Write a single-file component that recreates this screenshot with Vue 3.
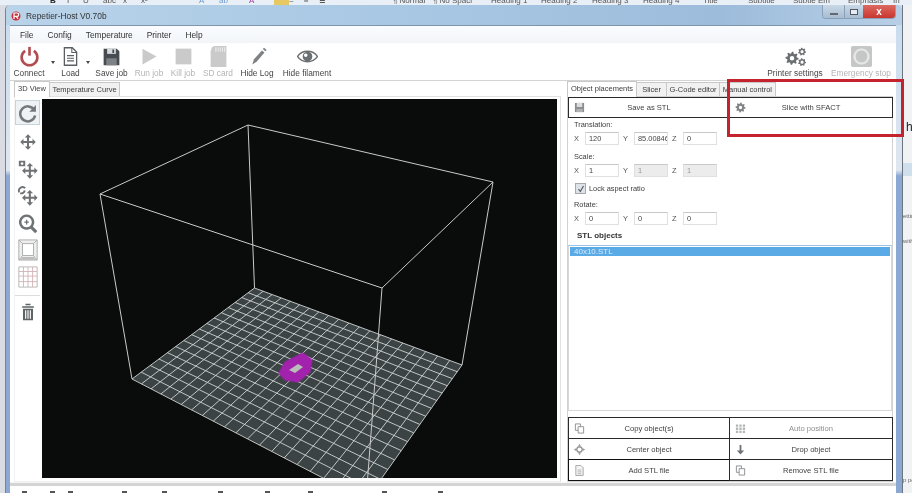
<template>
  <div class="screen">
    <div class="ribbon">
      <span v-for="r in ribbonItems" :key="r.t" :class="r.c" :style="{ width: r.w + 'px' }">{{ r.t }}</span>
    </div>

    <div class="desk">
      <div class="window">
        <div class="titlebar">
          <svg class="app-icon" width="10" height="10" viewBox="0 0 10 10">
            <circle cx="5" cy="5" r="4.5" fill="#c8303a" />
            <path d="M3 8V2h3a1.6 1.6 0 0 1 0 3.4H3M5.4 5.4 7 8" fill="none" stroke="#fff" stroke-width="1.2" />
          </svg>
          <span class="app-title">Repetier-Host V0.70b</span>
          <div class="caption">
            <div class="cap-btn cap-min"><i></i></div>
            <div class="cap-btn cap-max"><i></i></div>
            <div class="cap-btn cap-close">x</div>
          </div>
        </div>

        <div class="client">
          <div class="menubar">
            <span v-for="m in menus" :key="m" class="menu">{{ m }}</span>
          </div>

          <div class="toolbar">
            <div v-for="t in toolbarLeft" :key="t.label" class="tool" :class="{ off: t.off }" :style="{ width: t.w + 'px' }">
              <template v-if="t.arrow"><i class="drop"></i></template>
              <template v-else>
                <svg class="tool-icon" viewBox="0 0 24 24" width="21" height="21">
                  <path v-for="(p, i) in icons[t.icon]" :key="i" v-bind="p" fill-rule="evenodd" />
                </svg>
                <span>{{ t.label }}</span>
              </template>
            </div>
            <div class="spacer"></div>
            <div v-for="t in toolbarRight" :key="t.label" class="tool" :class="{ off: t.off }" :style="{ width: t.w + 'px' }">
              <svg class="tool-icon" viewBox="0 0 24 24" width="21" height="21">
                <path v-for="(p, i) in icons[t.icon]" :key="i" v-bind="p" fill-rule="evenodd" />
              </svg>
              <span>{{ t.label }}</span>
            </div>
          </div>

          <div class="workspace">
            <div class="left">
              <div class="tabs left-tabs">
                <div class="tab active">3D View</div>
                <div class="tab">Temperature Curve</div>
              </div>
              <div class="view-pane">
                <div class="side">
                  <div v-for="s in sideIcons" :key="s.icon" class="side-btn" :class="s.c">
                    <svg viewBox="0 0 24 24" width="22" height="22">
                      <path v-for="(p, i) in icons[s.icon]" :key="i" v-bind="p" fill-rule="evenodd" />
                    </svg>
                  </div>
                </div>
                <svg class="canvas" width="515" height="379" viewBox="42 99 515 379">
                  <path :d="floorOutline" fill="#3c4345" />
                  <path :d="gridPath" fill="none" stroke="#d0d4d2" stroke-width="0.9" />
                  <path d="M100 194 248 125 493 182 382 288ZM100 194 132 379M248 125 254.5 288M493 182 462 365M382 288 366 500" fill="none" stroke="#c8cac8" stroke-width="1" />
                  <path class="object" d="M279 373 285 362 303 353 312 360 310 372 298 382 285 380Z" fill="#a222ae" />
                  <path d="M289 370 298 364 303 367 295 373Z" fill="#b9bcb8" />
                </svg>
              </div>
            </div>

            <div class="right">
              <div class="tabs">
                <div class="tab active">Object placements</div>
                <div class="tab roomy">Slicer</div>
                <div class="tab">G-Code editor</div>
                <div class="tab">Manual control</div>
              </div>
              <div class="panel">
                <div class="btn-grid">
                  <div v-for="b in topButtons" :key="b.label" class="btn">
                    <svg viewBox="0 0 24 24" width="11" height="11">
                      <path v-for="(p, i) in icons[b.icon]" :key="i" v-bind="p" fill-rule="evenodd" />
                    </svg>
                    <span>{{ b.label }}</span>
                  </div>
                </div>

                <div class="form">
                  <template v-for="g in fieldGroups" :key="g.title">
                    <div class="form-label" :class="g.cls">{{ g.title }}</div>
                    <div class="field-row">
                      <template v-for="f in g.fields" :key="f.axis">
                        <span class="axis">{{ f.axis }}</span>
                        <div class="field" :class="{ locked: f.locked }">{{ f.value }}</div>
                      </template>
                    </div>
                    <label v-if="g.check" class="check">
                      <i class="check-box">
                        <svg width="8" height="8" viewBox="0 0 8 8"><path d="M1.5 4 3.3 6.5 6.5 1" fill="none" stroke="#555" stroke-width="1.1" /></svg>
                      </i>
                      Lock aspect ratio
                    </label>
                  </template>
                  <div class="stl-title">STL objects</div>
                </div>

                <div class="listbox">
                  <div class="list-row">40x10.STL</div>
                </div>

                <div class="btn-grid bottom-grid">
                  <div v-for="b in bottomButtons" :key="b.label" class="btn" :class="b.c">
                    <svg viewBox="0 0 24 24" width="11" height="11">
                      <path v-for="(p, i) in icons[b.icon]" :key="i" v-bind="p" fill-rule="evenodd" />
                    </svg>
                    <span>{{ b.label }}</span>
                  </div>
                </div>
              </div>
            </div>
          </div>

          <div class="log-sep"></div>
          <div class="log-bar">
            <i v-for="x in logTicks" :key="x" :style="{ width: x + 'px' }"><b></b></i>
          </div>
        </div>
      </div>

      <div class="doc">
        <span class="doc-h">h</span>
        <div class="doc-band"></div>
        <span class="doc-small doc-ettin">ettin</span>
        <span class="doc-small doc-with">with</span>
        <span class="doc-small doc-po">p po</span>
      </div>
    </div>

    <!-- annotation drawn on top of the screenshot -->
    <div class="red-box"></div>
  </div>
</template>

<script setup>
const ribbonItems = [
  { t: 'B', w: 17, c: 'b' }, { t: 'I', w: 16 }, { t: 'U', w: 20 }, { t: 'abc', w: 20 }, { t: 'x', w: 18 }, { t: 'x²', w: 58 },
  { t: 'A', w: 20, c: 'blue' }, { t: 'ab', w: 30, c: 'blue' }, { t: 'A', w: 25, c: 'pink' },
  { t: '', w: 15, c: 'swatch' }, { t: '=', w: 15 }, { t: '≡', w: 15 }, { t: '≣', w: 74 },
  { t: '¶ Normal', w: 40 }, { t: '¶ No Spaci', w: 58 }, { t: 'Heading 1', w: 50 }, { t: 'Heading 2', w: 51 },
  { t: 'Heading 3', w: 51 }, { t: 'Heading 4', w: 60 }, { t: 'Title', w: 45 }, { t: 'Subtitle', w: 45 },
  { t: 'Subtle Em', w: 55 }, { t: 'Emphasis', w: 45 }, { t: 'In', w: 10 },
]

const menus = ['File', 'Config', 'Temperature', 'Printer', 'Help']

const toolbarLeft = [
  { label: 'Connect', icon: 'power', w: 38 },
  { label: 'a1', arrow: true, w: 10 },
  { label: 'Load', icon: 'doc', w: 25 },
  { label: 'a2', arrow: true, w: 10 },
  { label: 'Save job', icon: 'floppy', w: 37 },
  { label: 'Run job', icon: 'play', w: 38, off: true },
  { label: 'Kill job', icon: 'stop', w: 30, off: true },
  { label: 'SD card', icon: 'sd', w: 40, off: true },
  { label: 'Hide Log', icon: 'pencil', w: 38 },
  { label: 'Hide filament', icon: 'eye', w: 62 },
]
const toolbarRight = [
  { label: 'Printer settings', icon: 'gears', w: 70 },
  { label: 'Emergency stop', icon: 'emergency', w: 62, off: true },
]

const sideIcons = [
  { icon: 'reset', c: 'selected' },
  { icon: 'move' },
  { icon: 'moveCam' },
  { icon: 'moveRot' },
  { icon: 'zoom' },
  { icon: 'box', c: 'faint' },
  { icon: 'grid', c: 'faint' },
  { icon: 'trash', c: 'after-line' },
]

const topButtons = [
  { label: 'Save as STL', icon: 'floppySoft' },
  { label: 'Slice with SFACT', icon: 'gearOne' },
]
const bottomButtons = [
  { label: 'Copy object(s)', icon: 'copy' },
  { label: 'Auto position', icon: 'dots', c: 'dim' },
  { label: 'Center object', icon: 'center' },
  { label: 'Drop object', icon: 'down' },
  { label: 'Add STL file', icon: 'docSoft', c: 'strong' },
  { label: 'Remove STL file', icon: 'copy' },
]

const fieldGroups = [
  {
    title: 'Translation:',
    fields: [{ axis: 'X', value: '120' }, { axis: 'Y', value: '85.00846' }, { axis: 'Z', value: '0' }],
  },
  {
    title: 'Scale:',
    check: true,
    fields: [{ axis: 'X', value: '1' }, { axis: 'Y', value: '1', locked: true }, { axis: 'Z', value: '1', locked: true }],
  },
  {
    title: 'Rotate:',
    cls: 'tight',
    fields: [{ axis: 'X', value: '0' }, { axis: 'Y', value: '0' }, { axis: 'Z', value: '0' }],
  },
]

// spacing between the cut off icons of the log toolbar
const logTicks = [17, 28, 18, 54, 40, 56, 47, 43, 74, 56]

function gear(cx, cy, r, teeth, hole) {
  let d = ''
  const n = teeth * 4
  for (let i = 0; i < n; i++) {
    const a = (i / n) * Math.PI * 2
    const rr = i % 4 < 2 ? r : r * 0.74
    d += (i ? 'L' : 'M') + (cx + Math.cos(a) * rr).toFixed(2) + ' ' + (cy + Math.sin(a) * rr).toFixed(2)
  }
  d += 'Z'
  d += `M${cx - hole} ${cy}a${hole} ${hole} 0 1 0 ${hole * 2} 0a${hole} ${hole} 0 1 0 ${-hole * 2} 0Z`
  return d
}

function cross(cx, cy, s) {
  const a = s
  const t = s * 0.42
  const w = s * 0.13
  let d = ''
  d += `M${cx} ${cy - a}l${t} ${t}h${-t + w}V${cy - w}H${cx + a - t}v${-t + w}L${cx + a} ${cy}l${-t} ${t}v${-t + w}H${cx + w}V${cy + a - t}h${t - w}L${cx} ${cy + a}l${-t} ${-t}h${t - w}V${cy + w}H${cx - a + t}v${t - w}L${cx - a} ${cy}l${t} ${-t}v${t - w}H${cx - w}V${cy - a + t}h${-t + w}Z`
  return d
}

const icons = {
  power: [
    { d: 'M7 5.5A9 9 0 1 0 17 5.5', fill: 'none', stroke: '#b24d50', 'stroke-width': 3 },
    { d: 'M12 1V11', fill: 'none', stroke: '#b24d50', 'stroke-width': 3 },
  ],
  doc: [
    { d: 'M5 2h9l5 5v15H5z', fill: 'none', stroke: '#5a5f63', 'stroke-width': 1.5 },
    { d: 'M13.5 2v5.5H19M8 11h8M8 14h8M8 17h8', fill: 'none', stroke: '#5a5f63', 'stroke-width': 1.2 },
  ],
  floppy: [
    { d: 'M3 3h15l3 3v16H3z', fill: '#474c52' },
    { d: 'M7 3h10v6H7z', fill: '#d8dadb' },
    { d: 'M13 4h2v4h-2z', fill: '#474c52' },
    { d: 'M6 14h12v8H6z', fill: '#7d8185' },
  ],
  play: [{ d: 'M4 3 20 12 4 21z', fill: '#cacaca' }],
  stop: [{ d: 'M3 3h18v18H3z', fill: '#cacaca' }],
  sd: [
    { d: 'M7 0h14v24H3V5l1-1V2z', fill: '#cacaca' },
    { d: 'M9 1.5v5M11.5 1.5v5M14 1.5v5M16.5 1.5v5M19 1.5v5', fill: 'none', stroke: '#f2f2f2', 'stroke-width': 1 },
  ],
  pencil: [
    { d: 'M8 15 17 5l3 2.5L11 18l-5 3z', fill: '#7f8285' },
    { d: 'M18 3.5l1.5-1.5 3 2.5L21 6z', fill: '#7f8285' },
  ],
  eye: [
    { d: 'M0.5 12C6 4 18 4 23.5 12 18 20 6 20 .5 12z', fill: 'none', stroke: '#6b6f72', 'stroke-width': 1.6 },
    { d: 'M12 6.5a5.5 5.5 0 1 0 .01 0zM10 8.5a2 2 0 1 0 .01 0z', fill: '#6b6f72' },
  ],
  gears: [
    { d: gear(8, 14, 7.5, 8, 2.6), fill: '#6a6f72' },
    { d: gear(19.5, 6.5, 4.6, 7, 1.8), fill: '#6a6f72' },
    { d: gear(19.5, 18.5, 4.6, 7, 1.8), fill: '#6a6f72' },
  ],
  emergency: [
    { d: 'M2 0h20a2 2 0 0 1 2 2v20a2 2 0 0 1-2 2H2a2 2 0 0 1-2-2V2a2 2 0 0 1 2-2z', fill: '#c5c7c7' },
    { d: 'M12 4a8 8 0 1 0 .01 0z', fill: 'none', stroke: '#e6e7e7', 'stroke-width': 2.4 },
  ],
  reset: [
    { d: 'M19.5 8.5A9 9 0 1 0 20.5 15', fill: 'none', stroke: '#74787b', 'stroke-width': 3 },
    { d: 'M21.5 2.5v8h-8z', fill: '#74787b' },
  ],
  move: [{ d: cross(12, 12, 8.5), fill: '#6f7376' }],
  moveCam: [
    { d: cross(14, 14, 8.5), fill: '#6f7376' },
    { d: 'M2 3h7v6H2zM5.5 4.5a1.5 1.5 0 1 0 .01 0z', fill: '#6f7376' },
  ],
  moveRot: [
    { d: cross(14, 14, 8.5), fill: '#6f7376' },
    { d: 'M2.5 8A4 4 0 0 1 9 3.5M8.5 6a4 4 0 0 1-5 3', fill: 'none', stroke: '#6f7376', 'stroke-width': 2 },
  ],
  zoom: [
    { d: 'M10.5 4a7 7 0 1 0 .01 0z', fill: 'none', stroke: '#6f7376', 'stroke-width': 2.6 },
    { d: 'M15.5 16.5 21 22', fill: 'none', stroke: '#6f7376', 'stroke-width': 3.4 },
    { d: 'M8 11h5M10.5 8.5v5', fill: 'none', stroke: '#6f7376', 'stroke-width': 1.4 },
  ],
  box: [
    { d: 'M2 1h20v22H2zM6 5h12v13H6zM2 1l4 4M22 1l-4 4M2 23l4-5M22 23l-4-5', fill: '#eeeeee', stroke: '#a9abab', 'stroke-width': 1 },
    { d: 'M3 22.5l3-3h12l3 3z', fill: '#bdbdbd' },
  ],
  grid: [
    { d: 'M2 1h20v22H2z', fill: 'none', stroke: '#b4b4b4', 'stroke-width': 1 },
    { d: 'M7 1v22M12 1v22M17 1v22M2 6h20M2 11h20M2 17h20', fill: 'none', stroke: '#d3b3b8', 'stroke-width': 1 },
  ],
  trash: [
    { d: 'M5 5h14v2H5zM9 2h6v2H9z', fill: '#5f6467' },
    { d: 'M6 8h12v14H6zM8.5 10v10h1.4V10zM11.3 10v10h1.4V10zM14.1 10v10h1.4V10z', fill: '#5f6467' },
  ],
  floppySoft: [
    { d: 'M2 2h20v20H2z', fill: '#8a8d90' },
    { d: 'M6 2h12v9H6z', fill: '#dcdcdc' },
    { d: 'M5 15h14v7H5z', fill: '#b0b2b4' },
  ],
  gearOne: [{ d: gear(12, 12, 11, 8, 3.6), fill: '#808487' }],
  copy: [
    { d: 'M3 2h11v14H3z', fill: '#fff', stroke: '#8a8d90', 'stroke-width': 2 },
    { d: 'M9 8h12v14H9z', fill: '#fff', stroke: '#8a8d90', 'stroke-width': 2 },
  ],
  dots: [
    { d: 'M2 3h5v5H2zM9.5 3h5v5h-5zM17 3h5v5h-5zM2 10h5v5H2zM9.5 10h5v5h-5zM17 10h5v5h-5zM2 17h5v5H2zM9.5 17h5v5h-5zM17 17h5v5h-5z', fill: '#b4b6b7' },
  ],
  center: [
    { d: 'M12 6a6 6 0 1 0 .01 0z', fill: 'none', stroke: '#8a8d90', 'stroke-width': 3 },
    { d: 'M12 0l3 4H9zM12 24l-3-4h6zM0 12l4-3v6zM24 12l-4 3V9z', fill: '#8a8d90' },
  ],
  down: [{ d: 'M10 2h4v12h6l-8 9-8-9h6z', fill: '#6f7376' }],
  docSoft: [
    { d: 'M4 1h11l5 5v17H4z', fill: '#f4f4f4', stroke: '#a0a2a4', 'stroke-width': 2 },
    { d: 'M8 11h8M8 15h8M8 19h8', fill: 'none', stroke: '#a0a2a4', 'stroke-width': 1.6 },
  ],
}

// printer bed, perspective from unit square to the four visible corners
const bed = [
  [254.5, 288],
  [462, 365],
  [366, 500.3],
  [132, 379],
]
const CELLS_U = 20
const CELLS_V = 16

function makeProjector([p0, p1, p2, p3]) {
  const dx1 = p1[0] - p2[0]
  const dx2 = p3[0] - p2[0]
  const sx = p0[0] - p1[0] + p2[0] - p3[0]
  const dy1 = p1[1] - p2[1]
  const dy2 = p3[1] - p2[1]
  const sy = p0[1] - p1[1] + p2[1] - p3[1]
  const den = dx1 * dy2 - dx2 * dy1
  const g = (sx * dy2 - dx2 * sy) / den
  const h = (dx1 * sy - sx * dy1) / den
  const a = p1[0] - p0[0] + g * p1[0]
  const b = p3[0] - p0[0] + h * p3[0]
  const d = p1[1] - p0[1] + g * p1[1]
  const e = p3[1] - p0[1] + h * p3[1]
  return (u, v) => {
    const w = g * u + h * v + 1
    return [((a * u + b * v + p0[0]) / w).toFixed(2), ((d * u + e * v + p0[1]) / w).toFixed(2)]
  }
}

const project = makeProjector(bed)
const floorOutline = 'M' + bed.map((p) => p.join(' ')).join('L') + 'Z'

let gridPath = ''
for (let i = 0; i <= CELLS_U; i++) {
  const t = i / CELLS_U
  gridPath += `M${project(t, 0).join(' ')}L${project(t, 1).join(' ')}`
}
for (let i = 0; i <= CELLS_V; i++) {
  const t = i / CELLS_V
  gridPath += `M${project(0, t).join(' ')}L${project(1, t).join(' ')}`
}
</script>

<style scoped>
.screen {
  position: relative;
  width: 912px;
  height: 493px;
  overflow: hidden;
  display: flex;
  flex-direction: column;
  background: #eef0f3;
  font-family: "Liberation Sans", Arial, sans-serif;
  color: #3c3c3c;
  filter: blur(0.3px);
}

/* word ribbon behind the window */
.ribbon {
  height: 5px;
  padding-left: 50px;
  display: flex;
  align-items: flex-end;
  overflow: hidden;
  background: #e9eff6;
  flex: none;
}
.ribbon span {
  flex: none;
  font-size: 8px;
  line-height: 9px;
  color: #555;
  white-space: nowrap;
}
.ribbon .b {
  font-weight: 700;
  color: #222;
}
.ribbon .blue {
  color: #6d9bd0;
}
.ribbon .pink {
  color: #a040a0;
}
.ribbon .swatch {
  height: 5px;
  background: #e8c860;
}

.desk {
  flex: 1;
  display: flex;
  min-height: 0;
  padding-left: 5px;
  background: #d9dce2;
}

.window {
  width: 897px;
  flex: none;
  display: flex;
  flex-direction: column;
  padding: 0 6px 0 4px;
  border-left: 1px solid #7d8288;
  box-sizing: border-box;
  border-radius: 5px 5px 0 0;
  background: linear-gradient(#c6dbee 0, #dfe7f0 165px, #8aa8d2 171px, #8aa8d2 100%);
}

.titlebar {
  height: 20px;
  flex: none;
  margin: 0 -6px 0 -4px;
  padding: 0 5px 0 5px;
  display: flex;
  align-items: flex-start;
  background: linear-gradient(90deg, #b9d3e9, #a6c6e3 50%, #9dbcdb 80%, #b7cfe6);
  border-radius: 5px 5px 0 0;
}
.app-icon {
  margin-top: 6px;
}
.app-title {
  margin: 6px 0 0 5px;
  font-size: 8.4px;
  line-height: 10px;
  color: #333;
}
.caption {
  margin-left: auto;
  display: flex;
  margin-right: 1px;
  height: 13px;
  border: 1px solid #8aa0b8;
  border-top: none;
  border-radius: 0 0 4px 4px;
  overflow: hidden;
}
.cap-btn {
  display: flex;
  align-items: center;
  justify-content: center;
  background: linear-gradient(#c9d8e6, #a7bdd2);
}
.cap-min {
  width: 21px;
}
.cap-min i {
  width: 8px;
  height: 2px;
  margin-top: 5px;
  background: #fff;
  border: 1px solid #667;
  box-sizing: border-box;
}
.cap-max {
  width: 18px;
  border-left: 1px solid #8aa0b8;
}
.cap-max i {
  width: 8px;
  height: 6px;
  border: 1px solid #556;
  box-sizing: border-box;
  background: #e5edf4;
}
.cap-close {
  width: 32px;
  background: linear-gradient(#dc6a60, #c9352e);
  color: #fff;
  font-size: 10px;
  font-weight: 700;
  line-height: 12px;
}

.client {
  flex: 1;
  min-height: 0;
  background: #fff;
  display: flex;
  flex-direction: column;
  border-top: 1px solid #7f95ab;
}

.menubar {
  height: 17px;
  flex: none;
  display: flex;
  align-items: center;
  gap: 14px;
  padding-left: 10px;
  font-size: 8.4px;
  color: #333;
  background: linear-gradient(#fafcff, #f2f5f8);
}

.toolbar {
  height: 37px;
  flex: none;
  display: flex;
  padding-right: 4px;
  border-bottom: 1px solid #d4d4d4;
}
.spacer {
  flex: 1;
}
.tool {
  flex: none;
  display: flex;
  flex-direction: column;
  align-items: center;
  font-size: 8.3px;
  white-space: nowrap;
  color: #444;
}
.tool-icon {
  margin: 3px 0 1px;
  flex: none;
}
.tool span {
  line-height: 10px;
}
.tool.off {
  color: #b4b4b4;
}
.drop {
  margin-top: 18px;
  width: 0;
  height: 0;
  border: 2px solid transparent;
  border-top: 3px solid #444;
  border-bottom: none;
}

.workspace {
  flex: 1;
  min-height: 0;
  display: flex;
}
.left {
  width: 551px;
  flex: none;
  padding-left: 4px;
  box-sizing: border-box;
  display: flex;
  flex-direction: column;
}
.right {
  flex: 1;
  min-width: 0;
  padding: 0 3px 0 6px;
  display: flex;
  flex-direction: column;
}

.tabs {
  height: 15px;
  flex: none;
  display: flex;
  align-items: flex-end;
  padding-left: 1px;
  font-size: 7.5px;
}
.left-tabs {
  padding-left: 1px;
}
.tab {
  height: 13px;
  line-height: 13px;
  padding: 0 2.6px;
  border: 1px solid #c8c8c8;
  border-bottom: none;
  margin-left: -1px;
  background: #f1f1f1;
  white-space: nowrap;
}
.tab.roomy {
  padding: 0 5px;
}
.tab.active {
  height: 15px;
  line-height: 13px;
  background: #fff;
  padding: 0 3px;
  position: relative;
  margin-bottom: -1px;
}

.view-pane {
  flex: 1;
  min-height: 0;
  display: flex;
  border: 1px solid #e2e2e2;
  border-left-color: #f4f4f4;
  border-bottom-color: #f0f0f0;
  padding: 2px 2px 2px 0;
}
.side {
  width: 27px;
  flex: none;
  display: flex;
  flex-direction: column;
}
.side-btn {
  width: 25px;
  height: 27px;
  flex: none;
  display: flex;
  align-items: center;
  justify-content: center;
}
.side-btn.selected {
  height: 25px;
  margin: 1px 0 3px;
  box-sizing: border-box;
  border: 1px solid #c8d4dc;
  background: #eef2f4;
}
.side-btn.selected svg {
  width: 20px;
  height: 20px;
}
.side-btn.after-line {
  margin-top: 5px;
  border-top: 1px solid #dcdcdc;
  padding-top: 4px;
  box-sizing: content-box;
  height: 24px;
}
.side-btn.after-line svg {
  width: 20px;
  height: 20px;
}
.canvas {
  display: block;
  flex: none;
  background: #0a0c0b;
}
.object {
  stroke: #a222ae;
  stroke-opacity: 0.45;
  stroke-width: 2;
}

.panel {
  flex: 1;
  min-height: 0;
  border: 1px solid #d2d2d2;
  display: flex;
  flex-direction: column;
  font-size: 7.4px;
}
.btn-grid {
  display: grid;
  grid-template-columns: 161px 163px;
  flex: none;
}
.btn {
  height: 21px;
  box-sizing: border-box;
  border: 1px solid #2a2a2a;
  margin: 0 -1px -1px 0;
  display: grid;
  grid-template-columns: 20px 1fr 20px;
  align-items: center;
  justify-items: center;
  background: #fff;
  color: #3e3e3e;
  font-size: 7.6px;
}
.btn span {
  grid-column: 2;
  white-space: nowrap;
}
.btn svg {
  grid-column: 1;
  grid-row: 1;
}
.btn.dim {
  color: #8f8f8f;
}
.btn.strong {
  border-width: 1.5px;
  border-color: #111;
}

.form {
  flex: none;
  padding: 1px 0 0 6px;
}
.form-label {
  height: 11px;
  line-height: 11px;
  margin-top: 1px;
}
.form-label.tight {
  margin-top: 4px;
}
.field-row {
  display: flex;
  align-items: center;
  height: 13px;
  margin: 2px 0 6px;
}
.axis {
  width: 11px;
  flex: none;
  color: #555;
}
.field {
  width: 34px;
  height: 13px;
  box-sizing: border-box;
  flex: none;
  border: 1px solid #e0e0e0;
  border-top-color: #c8c8c8;
  line-height: 11px;
  padding-left: 3px;
  margin-right: 4px;
  overflow: hidden;
  white-space: nowrap;
  color: #444;
}
.field.locked {
  background: #ececec;
  color: #999;
}
.check {
  display: flex;
  align-items: center;
  gap: 3px;
  height: 11px;
  margin: 6px 0 5px 1px;
}
.check-box {
  width: 9px;
  height: 9px;
  border: 1px solid #a8a8a8;
  background: #dde3ea;
  display: flex;
  align-items: center;
  justify-content: center;
}
.stl-title {
  font-weight: 700;
  font-size: 8px;
  color: #333;
  line-height: 10px;
  margin: 0 0 4px 3px;
}

.listbox {
  height: 166px;
  flex: none;
  border: 1px solid #d8d8d8;
  border-top-color: #9cc4e4;
  padding: 1px;
  box-sizing: border-box;
}
.list-row {
  height: 9px;
  line-height: 9px;
  padding-left: 4px;
  background: #5aaae6;
  color: #dcecf8;
  font-size: 8px;
}
.bottom-grid {
  margin-top: 6px;
}
.bottom-grid .btn {
  height: 22px;
}

.log-sep {
  height: 3px;
  flex: none;
  background: #d4d4d4;
  border-top: 1px solid #f4f4f4;
}
.log-bar {
  height: 7px;
  flex: none;
  display: flex;
  align-items: flex-end;
  background: #fff;
}
.log-bar i {
  flex: none;
  display: flex;
  justify-content: flex-end;
}
.log-bar b {
  width: 5px;
  height: 2px;
  background: #555;
}

/* word page on the right of the window */
.doc {
  flex: 1;
  min-width: 0;
  display: flex;
  flex-direction: column;
  background: #f1f2f3;
  overflow: hidden;
  border-left: 1px solid #6d7680;
}
.doc-h {
  margin: 115px 0 0 3px;
  font-size: 12px;
  line-height: 14px;
  color: #222;
}
.doc-band {
  height: 13px;
  margin-top: 29px;
  background: #cfe0ec;
}
.doc-small {
  font-size: 6px;
  line-height: 7px;
  color: #666;
  white-space: nowrap;
}
.doc-ettin {
  margin-top: 37px;
}
.doc-with {
  margin-top: 18px;
}
.doc-po {
  margin-top: 232px;
}

.red-box {
  position: absolute;
  left: 727px;
  top: 79px;
  width: 177px;
  height: 58px;
  box-sizing: border-box;
  border: 3px solid #c4222c;
}
</style>
